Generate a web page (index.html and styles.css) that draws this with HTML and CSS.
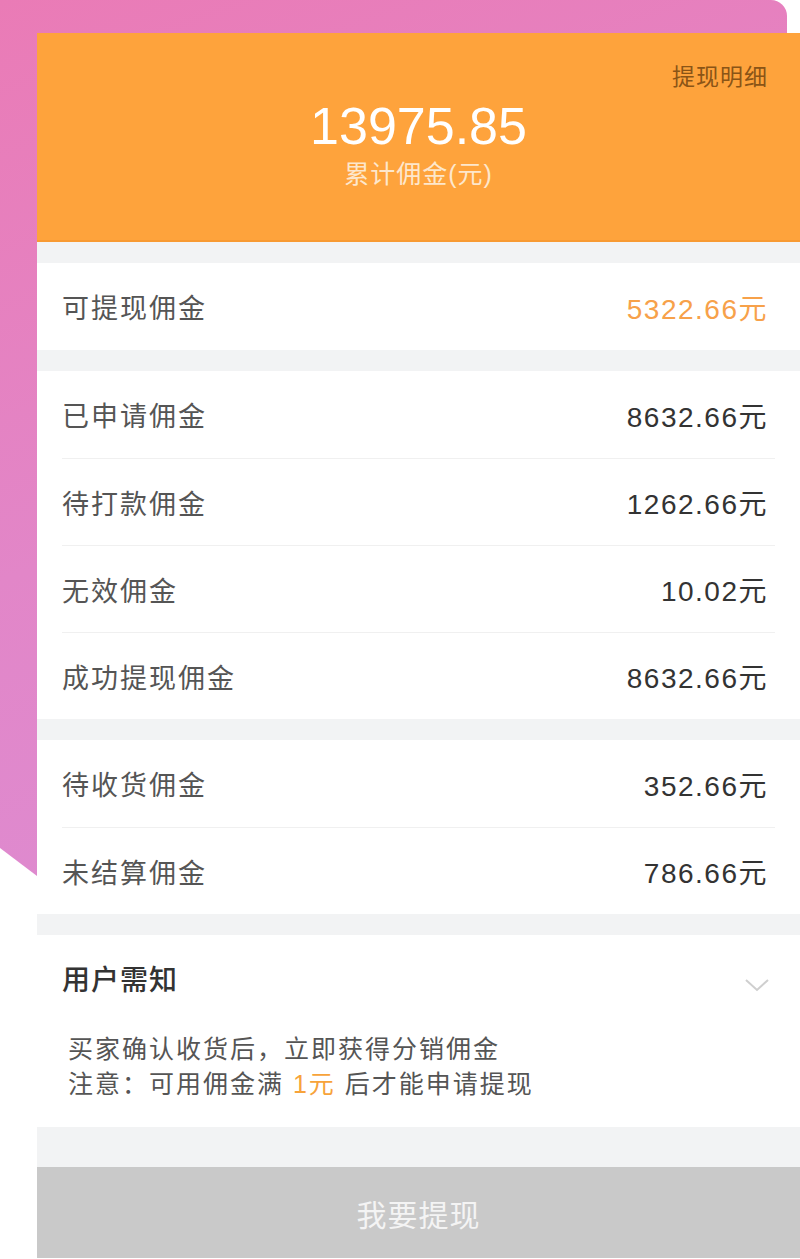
FILE: index.html
```html
<!DOCTYPE html>
<html lang="zh-CN">
<head>
    <meta charset="UTF-8">
    <meta name="viewport" content="width=device-width, initial-scale=1.0">
    <title>我的佣金</title>
    <link rel="stylesheet" href="styles.css">
</head>
<body>
    <div class="backdrop"></div>
    <div class="panel">
        <header class="summary">
            <div class="summary-top">
                <a class="detail-link" href="#">提现明细</a>
            </div>
            <div class="total">13975.85</div>
            <div class="total-label">累计佣金(元)</div>
        </header>

        <div class="group">
            <div class="row">
                <span class="label">可提现佣金</span>
                <span class="value highlight">5322.66元</span>
            </div>
        </div>

        <div class="group">
            <div class="row">
                <span class="label">已申请佣金</span>
                <span class="value">8632.66元</span>
            </div>
            <div class="row">
                <span class="label">待打款佣金</span>
                <span class="value">1262.66元</span>
            </div>
            <div class="row">
                <span class="label">无效佣金</span>
                <span class="value">10.02元</span>
            </div>
            <div class="row">
                <span class="label">成功提现佣金</span>
                <span class="value">8632.66元</span>
            </div>
        </div>

        <div class="group">
            <div class="row">
                <span class="label">待收货佣金</span>
                <span class="value">352.66元</span>
            </div>
            <div class="row">
                <span class="label">未结算佣金</span>
                <span class="value">786.66元</span>
            </div>
        </div>

        <div class="group notice">
            <div class="notice-head">
                <span class="notice-title">用户需知</span>
                <svg class="chevron" width="26" height="16" viewBox="0 0 26 16">
                    <polyline points="2,3 13,13 24,3" fill="none" stroke="#cfcfcf" stroke-width="2"/>
                </svg>
            </div>
            <p class="notice-text">买家确认收货后，立即获得分销佣金</p>
            <p class="notice-text">注意：可用佣金满 <span class="accent">1元</span> 后才能申请提现</p>
        </div>

        <div class="spacer"></div>
        <button class="withdraw">我要提现</button>
    </div>
</body>
</html>
```

FILE: styles.css
```css
body {
    margin: 0;
    width: 800px;
    background: #fff;
    font-family: "Liberation Sans", "Noto Sans CJK SC", sans-serif;
    position: relative;
    overflow: hidden;
}
/* tilted card peeking out behind the panel */
.backdrop {
    position: absolute;
    left: 0;
    top: 0;
    width: 787px;
    height: 876px;
    border-radius: 0 16px 0 0;
    background: linear-gradient(160deg, #ea7bb6 0%, #e286c8 50%, #dc8dd4 100%);
    clip-path: polygon(0 0, 100% 0, 100% 100%, 37px 100%, 0 848px);
}
.panel {
    position: relative;
    margin: 33px 0 0 37px;
    width: 763px;
    background: #f2f3f4;
}
.summary {
    height: 209px;
    box-sizing: border-box;
    padding-top: 30px;
    background: #fea33c;
    border-bottom: 2px solid #f89a32;
    text-align: center;
}
.summary-top {
    text-align: right;
    padding-right: 32px;
    line-height: 28px;
}
.detail-link {
    color: #8a5416;
    font-size: 23px;
    letter-spacing: 1px;
    text-decoration: none;
}
.total {
    margin-top: 7px;
    color: #fff;
    font-size: 52px;
    line-height: 50px;
}
.total-label {
    margin-top: 8px;
    color: #fde7cc;
    font-size: 25px;
    line-height: 30px;
    letter-spacing: 1px;
}
.group {
    background: #fff;
    margin-top: 21px;
}
.row {
    display: flex;
    justify-content: space-between;
    align-items: center;
    box-sizing: border-box;
    height: 87px;
    margin: 0 25px;
    padding-right: 7px;
}
.row + .row {
    border-top: 1px solid #f0f0f0;
}
.label {
    color: #555;
    font-size: 27px;
    letter-spacing: 2px;
}
.value {
    color: #333;
    font-size: 28px;
    letter-spacing: 1.5px;
}
.value.highlight {
    color: #f7a14a;
}
.notice {
    padding: 26px 30px 25px 25px;
}
.notice-head {
    display: flex;
    justify-content: space-between;
    align-items: center;
    line-height: 40px;
}
.notice-title {
    color: #333;
    font-size: 28px;
    font-weight: 500;
    letter-spacing: 1px;
}
.chevron {
    margin-top: 8px;
}
.notice-text {
    margin: 0;
    padding-left: 6px;
    color: #555;
    font-size: 25px;
    line-height: 35px;
    letter-spacing: 2px;
}
.notice-text:first-of-type {
    margin-top: 31px;
}
.accent {
    color: #f7a33a;
}
.spacer {
    height: 40px;
}
.withdraw {
    display: block;
    width: 100%;
    height: 91px;
    border: none;
    background: #c9c9c9;
    color: #f4f4f4;
    font-family: "Noto Sans CJK SC", sans-serif;
    font-size: 30px;
    letter-spacing: 1px;
}
```
